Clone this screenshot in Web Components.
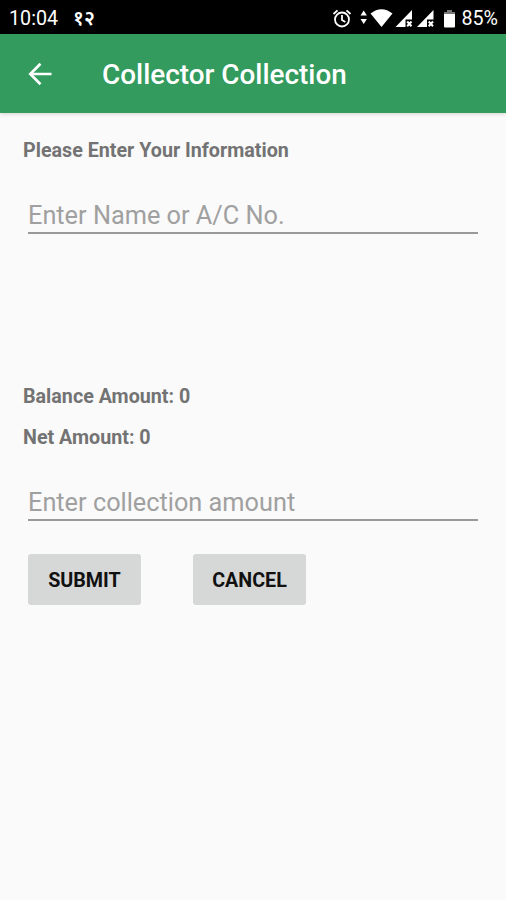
<!DOCTYPE html>
<html lang="en">
<head>
<meta charset="utf-8">
<title>Collector Collection</title>
<style>
    body {
        margin: 0;
        background: #fafafa;
        font-family: Roboto, "Noto Sans", sans-serif;
    }
</style>
</head>
<body>

<collector-screen>
    <status-bar slot="status" time="10:04" battery="85%">१२</status-bar>
    <app-bar slot="bar">Collector Collection</app-bar>

    <form-label class="intro">Please Enter Your Information</form-label>
    <text-field class="name">Enter Name or A/C No.</text-field>
    <form-label class="balance">Balance Amount: 0</form-label>
    <form-label class="net">Net Amount: 0</form-label>
    <text-field class="amount">Enter collection amount</text-field>
    <button-row>
        <flat-button>SUBMIT</flat-button>
        <flat-button>CANCEL</flat-button>
    </button-row>
</collector-screen>

<script>
// ╭───────────────────────────────────────────────────────╮
// │                        HELPER                         │
// ╰───────────────────────────────────────────────────────╯
function define(name, html, setup) {
    const template = document.createElement('template');
    template.innerHTML = html;

    customElements.define(name, class extends HTMLElement {
        constructor() {
            super();
            this.attachShadow({ mode: "open" });
            this.shadowRoot.appendChild(template.content.cloneNode(true));
        }

        connectedCallback() {
            if (setup) setup(this);
        }
    });
}

// ╭───────────────────────────────────────────────────────╮
// │                        SCREEN                         │
// ╰───────────────────────────────────────────────────────╯
define('collector-screen', /* html */`
    <style>
        :host {
            display: flex;
            flex-direction: column;
            height: 900px;
            overflow: hidden;
            background: #fafafa;
        }

        main {
            display: flex;
            flex-direction: column;
            padding: 26px 28px 0 23px;
        }

        ::slotted(.name)    { margin: 37px 0 0 5px; }
        ::slotted(.balance) { margin-top: 151px; }
        ::slotted(.net)     { margin-top: 17px; }
        ::slotted(.amount)  { margin: 37px 0 0 5px; }
        ::slotted(button-row) { margin: 33px 0 0 5px; }
    </style>
    <slot name="status"></slot>
    <slot name="bar"></slot>
    <main><slot></slot></main>
`);

// ╭───────────────────────────────────────────────────────╮
// │                      STATUS BAR                       │
// ╰───────────────────────────────────────────────────────╯
define('status-bar', /* html */`
    <style>
        :host {
            display: flex;
            align-items: center;
            box-sizing: border-box;
            height: 34px;
            padding: 3px 8px 0 9px;
            background: #000;
            color: #fff;
            font-size: 19.7px;
            line-height: 31px;
        }

        .note {
            flex: 1;
            margin-left: 15px;
            font-size: 20px;
            font-weight: 600;
        }

        .icons { display: block; margin-right: 3px; }
    </style>
    <span class="time"></span>
    <span class="note"><slot></slot></span>
    <svg class="icons" width="126" height="24" viewBox="332 6 126 24" fill="#fff">
        <!-- alarm -->
        <g fill="none" stroke="#fff" stroke-width="1.8">
            <circle cx="342" cy="18.5" r="7"/>
            <path d="M342 14v5l3.3 2M333.5 13l4-3.6M350.500 13l-4-3.6"/>
        </g>
        <!-- data arrows -->
        <path d="M360.500 14.500l3.200-5 3.200 5zM360.500 18h6.400l-3.200 5z"/>
        <!-- wifi -->
        <path d="M370.500 12.500Q381.500 4 392.500 12.500L381.500 26z"/>
        <!-- signals -->
        <path d="M395.500 26L412 9V18.500H405.500V26z"/>
        <path d="M417 26L433.500 9V18.500H427V26z"/>
        <path d="M407.200 20.500l4.300 4.700M411.500 20.500l-4.300 4.700M428.700 20.500l4.300 4.700M433 20.500l-4.300 4.700" stroke="#fff" stroke-width="2"/>
        <!-- battery -->
        <path d="M447 9h5v2h3v2.500h-11V11h3z" fill="#777"/>
        <path d="M444 13h11v12.500q0 1-1 1h-9q-1 0-1-1z"/>
    </svg>
    <span class="battery"></span>
`, el => {
    el.shadowRoot.querySelector('.time').textContent = el.getAttribute('time');
    el.shadowRoot.querySelector('.battery').textContent = el.getAttribute('battery');
});

// ╭───────────────────────────────────────────────────────╮
// │                        APP BAR                        │
// ╰───────────────────────────────────────────────────────╯
define('app-bar', /* html */`
    <style>
        :host {
            display: flex;
            align-items: center;
            box-sizing: border-box;
            height: 79px;
            padding: 1px 28px 0;
            background: #329b5d;
            box-shadow: 0 1px 4px rgba(0, 0, 0, .16);
            color: #fff;
            font-size: 27.9px;
            font-weight: 500;
        }

        svg { margin-right: 50px; }
    </style>
    <svg width="24" height="24" viewBox="0 0 24 24" fill="none" stroke="#fff" stroke-width="2.700">
        <path d="M23.500 12H2.500M12.500 1.800L2.300 12l10.200 10.200"/>
    </svg>
    <slot></slot>
`);

// ╭───────────────────────────────────────────────────────╮
// │                      FORM PARTS                       │
// ╰───────────────────────────────────────────────────────╯
define('form-label', /* html */`
    <style>
        :host {
            display: block;
            color: #737373;
            font-size: 19.7px;
            font-weight: 700;
            line-height: 24px;
        }
    </style>
    <slot></slot>
`);

define('text-field', /* html */`
    <style>
        :host {
            display: block;
            height: 32px;
            border-bottom: 2px solid #999;
            color: #a0a0a0;
            font-size: 25.3px;
            line-height: 32px;
        }
    </style>
    <slot></slot>
`);

define('button-row', /* html */`
    <style>
        :host {
            display: flex;
            gap: 52px;
        }
    </style>
    <slot></slot>
`);

define('flat-button', /* html */`
    <style>
        :host { display: block; }

        button {
            display: block;
            width: 113px;
            height: 51px;
            padding: 1px 0 0;
            border: 0;
            border-radius: 3px;
            background: #d6d8d7;
            color: #111;
            font-family: inherit;
            font-size: 19.7px;
            font-weight: 700;
        }
    </style>
    <button type="button"><slot></slot></button>
`);
</script>
</body>
</html>
